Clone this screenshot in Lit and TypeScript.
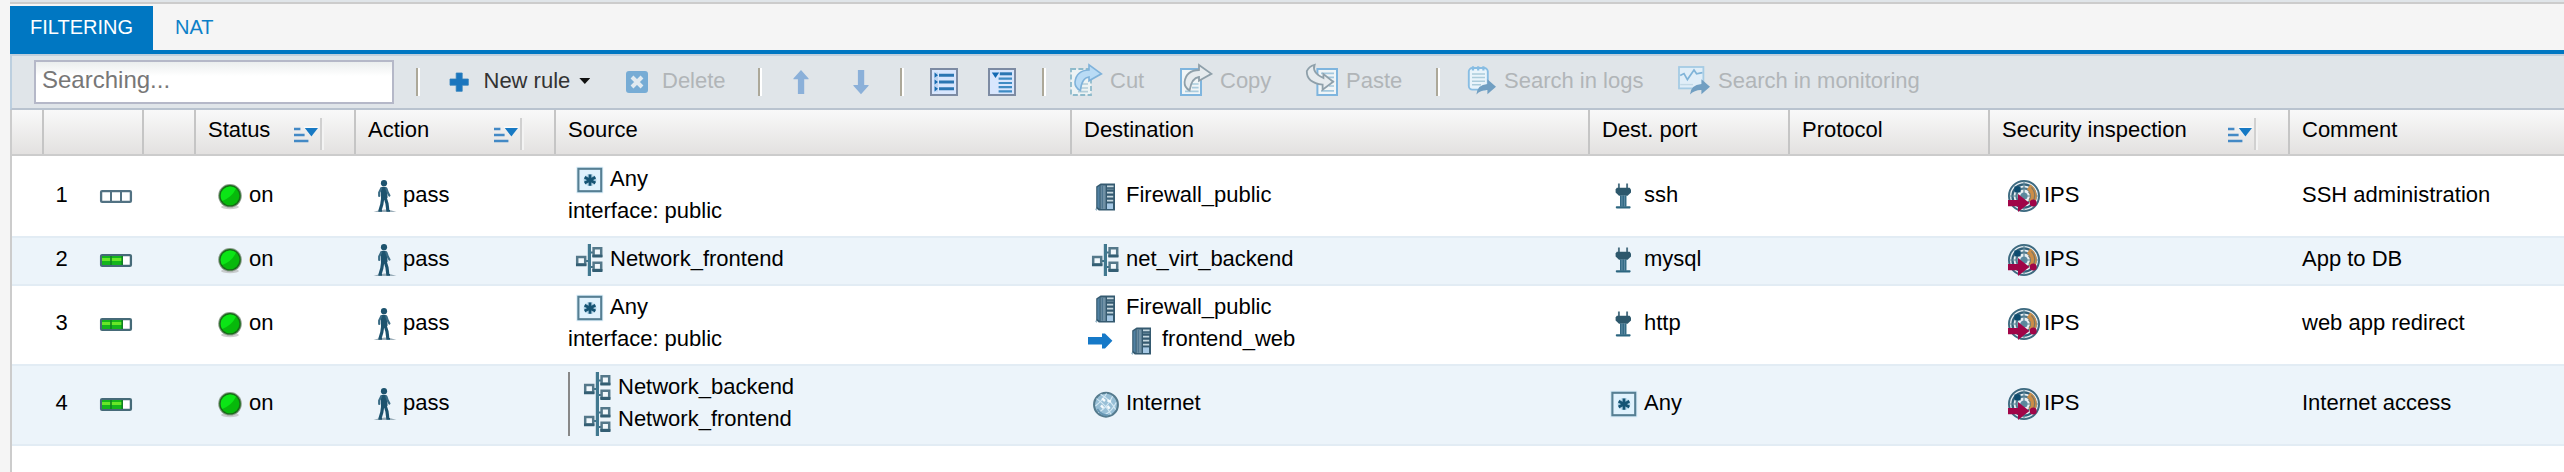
import { LitElement, html, css, svg, nothing } from "lit";
import { customElement, property } from "lit/decorators.js";

const shapes: Record<string, unknown> = {
  any: svg`
    <rect x="3.4" y="2.8" width="26.8" height="26.4" fill="#c9e6f6" opacity="0.75"/>
    <rect x="5.4" y="4.8" width="22.8" height="22.4" fill="#e0f2fd" stroke="#567f93" stroke-width="2.1"/>
    <path d="M17 10V22M11.6 13.4L22.4 18.8M22.4 13.4L11.6 18.8" stroke="#a9cde2" stroke-width="5"/>
    <path d="M17 10.4V21.8M11.6 13.2L22.4 19M22.4 13.2L11.6 19" stroke="#155474" stroke-width="2.7"/>`,
  net: svg`
    <path d="M12.5 17H16M17 8.6H20M17 23H20" stroke="#3f7389" stroke-width="2"/>
    <rect x="14.8" y="0" width="3.2" height="32" fill="#41788f"/>
    <path d="M4.2 13H12.2V20.4H4.2ZM20.6 4.3H28.2V11.7H20.6ZM20.6 18.7H28.2V26.1H20.6Z" fill="#f1f8fc" stroke="#54788a" stroke-width="2.5"/>
    <path d="M3 19.4H13.4V22.3H3ZM19.4 10.7H29.4V13.6H19.4ZM19.4 25.1H29.4V28H19.4Z" fill="#335e73"/>`,
  host: svg`
    <path d="M6 29.6L8 27V31Z" fill="#9dbccd"/>
    <path d="M7.2 6.6L11.6 3.4H26V30.6H9.8L7.2 28.2Z" fill="#355a70"/>
    <path d="M8.4 7.4L10.6 5.8V28.8L8.4 27Z" fill="#5181a2"/>
    <rect x="11.6" y="5.4" width="5" height="23.6" fill="#7192a6"/>
    <path d="M13.3 6V28.6" stroke="#47708b" stroke-width="1"/>
    <path d="M18 6.4H24.6M18 12.6H24.2M18 16.6H24.2M18 20.6H24.2" stroke="#c5d7df" stroke-width="1.9"/>
    <path d="M18 9.3H24.6" stroke="#5d8093" stroke-width="1.4"/>
    <rect x="18" y="23.4" width="6" height="5.6" fill="#a5c8e4"/>`,
  globe: svg`
    <circle cx="17" cy="16.7" r="11.9" fill="#98bfd6" stroke="#557b8e" stroke-width="2.1"/>
    <path d="M7.4 10.6Q17 17 22.2 26.6M11.6 6.2Q21.6 12 26.6 21.4M6.4 18Q13.6 12.6 17.6 5.6M9.4 24.6Q19 18.6 23.6 8.2M15.2 27.2Q23.2 23 27.2 14.4" fill="none" stroke="#d5e9f4" stroke-width="1.1"/>
    <path d="M13 10.4L16 13M18.4 12.4L22 13.6M12 17.4L14.4 20M18.6 18L20.6 20.8" stroke="#f4fafd" stroke-width="2.4"/>
    <path d="M8.4 21Q12 27.4 19 27.4" fill="none" stroke="#6595b2" stroke-width="1.6"/>`,
  plug: svg`
    <path d="M11.9 3.4V9M20.1 3.4V9" stroke="#4d7183" stroke-width="1.9"/>
    <path d="M9.8 7.8H22.6L24 9.4V12.4L20.6 15.8H12L8.6 12.4V9.4Z" fill="#2d586c"/>
    <rect x="13.2" y="15.6" width="6" height="11" fill="#5d8aa3"/>
    <path d="M16.2 15.6V26.6M13.7 15.6V26.6M18.8 15.6V26.6" stroke="#26617c" stroke-width="1.1"/>
    <rect x="8.8" y="26.2" width="14.8" height="2.2" rx="0.8" fill="#2c6680"/>`,
  ips: svg`
    <circle cx="16" cy="16" r="15" fill="#e8eff3" stroke="#3d6a80" stroke-width="2"/>
    <circle cx="16" cy="16" r="11.6" fill="none" stroke="#316079" stroke-width="2.2"/>
    <circle cx="16" cy="16" r="7.6" fill="none" stroke="#4f788c" stroke-width="2.1"/>
    <circle cx="16" cy="16" r="3.6" fill="#5a8ba3"/>
    <path d="M16 1V31M1 16H31" stroke="#5d8798" stroke-width="1.2"/>
    <path d="M22.2 4.6A13 13 0 0 1 25 25L20.6 20.8A7 7 0 0 0 19 9.6Z" fill="#cb8d47"/>
    <path d="M23.4 7.4A11.4 11.4 0 0 1 24.6 22M20.4 11.6A6.4 6.4 0 0 1 21 20" fill="none" stroke="#7a7766" stroke-width="1.2"/>
    <rect x="6.4" y="6.4" width="6.2" height="6" fill="#0d4b6e"/>
    <path d="M0 20H10V14L21.4 23L10 32V26.2H0Z" fill="#a00548"/>
    <circle cx="25.2" cy="23" r="3.5" fill="#a00548"/>`,
  walk: svg`
    <path d="M5.6 32Q11 29.4 17 29.4T28.4 32Z" fill="#8ba0ad" opacity="0.85"/>
    <circle cx="16" cy="3.2" r="3.1" fill="#1d536e"/>
    <path d="M12.6 7.4Q15.6 5.8 18.8 7.6L19.6 17.6L18 19.4H13L12.8 9.4Z" fill="#1d536e"/>
    <path d="M13.2 8.4L11.2 12.6V16M18.4 8.6L19.8 12.6L21.4 15.6" fill="none" stroke="#3a6c85" stroke-width="2.2" stroke-linecap="round"/>
    <path d="M14.8 17.6L13.8 24.4L12 30.4M17.2 17.6L19 23.6L19.8 30.4" fill="none" stroke="#1d536e" stroke-width="3.2"/>
    <path d="M10.4 30.8H14M18.4 30.8H22" stroke="#1d536e" stroke-width="1.8"/>`,
  on: svg`
    <ellipse cx="16" cy="27" rx="9" ry="2.2" fill="#b9b9b9" opacity="0.7"/>
    <circle cx="16" cy="15.8" r="11.8" fill="#8a9a8a"/>
    <circle cx="16" cy="15.8" r="10.8" fill="#176c17"/>
    <circle cx="16" cy="15.8" r="9.4" fill="#07b90b"/>
    <path d="M8.2 21A9.4 9.4 0 0 1 22 8.6Q18 17.4 8.2 21Z" fill="#0be516"/>`,
  redirect: svg`<path d="M0 13H14V9.6H17L24.4 16.8L17 24.4H14V20.6H0Z" fill="#1679c8"/>`,
  "level-0": svg`
    <rect x="1.1" y="11.1" width="29.8" height="10.8" rx="1" fill="#fff" stroke="#527283" stroke-width="2.3"/>
    <path d="M11 10.8V22M21 10.8V22" stroke="#527283" stroke-width="2"/>`,
  "level-2": svg`
    <rect x="1.1" y="11.1" width="29.8" height="10.8" rx="1" fill="#fff" stroke="#466a78" stroke-width="2.3"/>
    <rect x="2" y="12" width="20.4" height="9" fill="#14b51c"/>
    <rect x="2" y="14" width="20.4" height="3" fill="#68e628"/>
    <path d="M11 12V21M22.2 12V21" stroke="#108022" stroke-width="1.6"/>`,
  sort: svg`
    <path d="M0 9H6.4M0 15H10.6M0 21H14.4" stroke="#4389c5" stroke-width="2.5"/>
    <path d="M9.4 6.4H25.4L17 17Z" fill="#fff" opacity="0.7"/>
    <path d="M10.8 8H24L17.4 16.6Z" fill="#1779c3"/>`,
  plus: svg`<path d="M13.2 7H19.2V13H25.3V19.2H19.2V25.3H13.2V19.2H7V13H13.2Z" fill="#1b76be" stroke="#3182bd" stroke-width="0.8"/>`,
  remove: svg`
    <rect x="5" y="5" width="22" height="22" rx="3" fill="#77acd5"/>
    <path d="M11 11L21 21M21 11L11 21" stroke="#e1eaf0" stroke-width="4"/>`,
  up: svg`<path d="M16 4L23.6 12.4V13.2H19.2V28H12.9V13.2H8.4V12.4Z" fill="#8bb0d9"/>`,
  down: svg`<path d="M16 28.2L8.4 19.8V19H12.9V4H19.2V19H23.6V19.8Z" fill="#8bb0d9"/>`,
  list: svg`
    <rect x="3" y="3" width="26" height="26" fill="#d8e6fd" stroke="#7d8ba3" stroke-width="2"/>
    <path d="M6 6.4H10V25.6H6Z" fill="#bcd4f2"/>
    <path d="M11 9.2H26M11 16H26M11 22.8H26" stroke="#2b76b2" stroke-width="3"/>
    <path d="M6.6 6.6L10 9.2L6.6 11.8ZM6.6 13.4L10 16L6.6 18.6ZM6.6 20.2L10 22.8L6.6 25.4Z" fill="#176bb1"/>`,
  tree: svg`
    <rect x="3" y="3" width="26" height="26" fill="#d8e6fd" stroke="#7d8ba3" stroke-width="2"/>
    <path d="M5.8 6.6H13.2L9.5 12Z" fill="#1269b3"/>
    <path d="M13.8 7.8H26" stroke="#2b76b2" stroke-width="3"/>
    <path d="M12.6 12.6H26M12.6 17H26M12.6 21.2H26M12.6 25.4H26" stroke="#3e8bc4" stroke-width="2.2"/>`,
  cut: svg`
    <path d="M1 5H21V31H1Z" fill="#edf3f4" stroke="#8ebacb" stroke-width="1.8" stroke-dasharray="5 2.4"/>
    <path d="M10 20H18M10 24H18M8 27.6H18" stroke="#b3cdd8" stroke-width="1.6"/>
    <path d="M5 18Q6.4 6.4 19 6V0.9L31.4 9.8L19 16.8V13Q11.6 13.8 10.4 26.6Q4.6 23.6 5 18Z" fill="#b9dbf5" stroke="#7fb2da" stroke-width="1.6"/>`,
  copy: svg`
    <path d="M1 5H21V31H1Z" fill="#f0f5f7" stroke="#7fb5de" stroke-width="2"/>
    <path d="M12 20H18.6M12 23.6H18.6M5 27.4H18.6" stroke="#a9cbdd" stroke-width="1.7"/>
    <path d="M4.6 18Q6 6.4 19 6V0.9L31.4 9.8L19 16.8V13Q11.6 13.8 9.6 26.4Q4.2 23.6 4.6 18Z" fill="#e6ebee" stroke="#8fa0aa" stroke-width="1.8"/>`,
  paste: svg`
    <path d="M11.4 5H31V31H11.4Z" fill="#f0f5f7" stroke="#7fb5de" stroke-width="2"/>
    <path d="M15 9.4H28M18 13.4H28M24 17.4H28M23 22H28M15 26.8H28" stroke="#a3c8de" stroke-width="1.7"/>
    <path d="M8.6 0.8Q5.6 8.4 17.4 14V10L27.2 17.8L16.6 25.6V20.6Q0.6 18.6 0.8 7.2Q3 2 8.6 0.8Z" fill="#e6ebee" stroke="#8fa0aa" stroke-width="1.8"/>`,
  logs: svg`
    <rect x="4.8" y="4" width="19" height="21.6" rx="3.6" fill="#e9f4fb" stroke="#88bde3" stroke-width="1.9"/>
    <path d="M9 2.2V6.4M14.2 2.2V6.4M19.4 2.2V6.4" stroke="#88bde3" stroke-width="2.2"/>
    <path d="M8 10H21M8 13.6H21M8 17.2H21M8 20.8H17" stroke="#abccdb" stroke-width="1.5"/>
    <path d="M12.4 30.6Q13 20.6 23.4 20V15.2L32 22.8L23.4 30.2V26Q16.6 25.8 12.4 30.6Z" fill="#719fc2"/>`,
  chart: svg`
    <rect x="1" y="3" width="24.4" height="21.4" fill="#e0eef8" stroke="#a5cbe4" stroke-width="1.8"/>
    <path d="M2.2 11.4L6 9.6L9.4 15.6L16 6L18.6 9.8L24.4 8.6" fill="none" stroke="#80b4d8" stroke-width="1.7"/>
    <path d="M2.2 20.6H15" stroke="#c3d9e6" stroke-width="1.4"/>
    <path d="M12 30.6Q12.6 20.8 23.4 20V15.2L32 22.8L23.4 30.2V26Q16.6 25.8 12 30.6Z" fill="#719fc2"/>`,
};

@customElement("fw-icon")
class FwIcon extends LitElement {
  static styles = css`
    :host { display: block; flex: none; width: 32px; height: 32px; }
    svg { display: block; width: 32px; height: 32px; overflow: visible; }
  `;
  @property() name = "";
  render() {
    return html`<svg viewBox="0 0 32 32" fill="none">${shapes[this.name]}</svg>`;
  }
}

interface Entry {
  icon?: string;
  text: string;
  redirect?: boolean;
}
interface Rule {
  level: string;
  source: Entry[];
  dest: Entry[];
  port: Entry;
  comment: string;
}

const anyPublic: Entry[] = [{ icon: "any", text: "Any" }, { text: "interface: public" }];

const rules: Rule[] = [
  { level: "level-0", source: anyPublic, dest: [{ icon: "host", text: "Firewall_public" }],
    port: { icon: "plug", text: "ssh" }, comment: "SSH administration" },
  { level: "level-2", source: [{ icon: "net", text: "Network_frontend" }], dest: [{ icon: "net", text: "net_virt_backend" }],
    port: { icon: "plug", text: "mysql" }, comment: "App to DB" },
  { level: "level-2", source: anyPublic,
    dest: [{ icon: "host", text: "Firewall_public" }, { icon: "host", text: "frontend_web", redirect: true }],
    port: { icon: "plug", text: "http" }, comment: "web app redirect" },
  { level: "level-2", source: [{ icon: "net", text: "Network_backend" }, { icon: "net", text: "Network_frontend" }],
    dest: [{ icon: "globe", text: "Internet" }], port: { icon: "any", text: "Any" }, comment: "Internet access" },
];

const headers: { label: string; sort?: boolean }[] = [
  { label: "" }, { label: "" }, { label: "" },
  { label: "Status", sort: true }, { label: "Action", sort: true },
  { label: "Source" }, { label: "Destination" }, { label: "Dest. port" }, { label: "Protocol" },
  { label: "Security inspection", sort: true }, { label: "Comment" },
];

@customElement("app-root")
class AppRoot extends LitElement {
  static styles = css`
    :host {
      display: flex; flex-direction: column; box-sizing: border-box;
      width: 100%; height: 472px; padding-left: 10px; overflow: hidden;
      background: #f5f5f5; color: #000;
      font: 22px/29px "Liberation Sans", Arial, Helvetica, sans-serif;
      white-space: nowrap;
    }
    * { box-sizing: border-box; }
    .strip { flex: none; height: 4px; background: #e0e5e9; border-bottom: 2px solid #ccc; }
    .tabs { flex: none; display: flex; height: 50px; padding-top: 2px; border-bottom: 4px solid #0077c2; font-size: 20px; line-height: 22px; color: #0c80c8; }
    .tab { padding: 10px 22px 0; }
    .tab.active { width: 143px; padding: 10px 0 0 20px; background: #0077c2; color: #fff; }
    .toolbar {
      flex: none; display: flex; height: 56px; padding: 4px 0 0 22px;
      background: #e0e5e9; border: 2px solid #b9c3cf; border-top-color: #c1cfdc; border-left: 2px solid #bccfdf; border-right: 0;
    }
    .search {
      width: 360px; height: 44px; margin: 0; padding: 0 0 5px 6px; border: 2px solid #b5b8c8; border-radius: 0;
      background: linear-gradient(#ebeeee, #fff 14px); font: 24px "Liberation Sans", Arial, sans-serif; outline: none;
    }
    .search::placeholder { color: #777; opacity: 1; }
    .sep { flex: none; width: 4px; height: 28px; margin-top: 8px; background: linear-gradient(90deg, #aca899 50%, #fff 50%); }
    .btn { flex: none; display: flex; height: 44px; padding-top: 6px; color: #333; }
    .btn.off { color: #b1b5b8; }
    .btn span { margin-left: 8px; }
    .s1 { margin-left: 22px; }
    .new { width: 180px; margin-left: 23px; }
    .new span { margin-left: 8.5px; }
    .caret { width: 11px; height: 6px; margin: 12px 0 0 9px; background: #111; clip-path: polygon(0 0, 100% 0, 50% 100%); }
    .delete { width: 137px; margin-left: -2px; }
    .delete span { margin-left: 9px; }
    .up { width: 60px; margin-left: 23px; }
    .down { width: 32px; }
    .s3 { margin-left: 23px; }
    .list { width: 58px; margin-left: 24px; }
    .tree { width: 32px; }
    .s4 { margin-left: 24px; }
    .cut { width: 110px; margin-left: 24px; }
    .copy { width: 126px; }
    .paste { width: 106px; }
    .s5 { margin-left: 24px; }
    .logs { width: 214px; margin-left: 24px; }
    .icon-hi { padding-top: 4px; }
    .icon-hi span { margin-top: 2px; }

    .grid { flex: 1; min-height: 0; background: #fff; border-left: 2px solid #ccc; }
    .head, .row { display: grid; grid-template-columns: 32px 100px 52px 160px 200px 516px 518px 200px 200px 300px 1fr; }
    .head { height: 46px; background: linear-gradient(#f9f9f9, #e3e1e0); border-bottom: 2px solid #ccc; }
    .th { display: flex; height: 44px; padding: 5px 0 0 12px; border-right: 2px solid #c5c5c5; }
    .th:last-child { border-right: 0; }
    .sorter { display: flex; margin: 3px 32px 0 auto; height: 32px; }
    .sorter fw-icon { width: 26px; margin-top: 2px; }
    .grip { width: 4px; height: 32px; margin-right: -2px; background: linear-gradient(90deg, #d0d0d0 50%, #f3f3f3 50%); }

    .row { padding: 6px 0 8px; border-bottom: 2px solid #e2ecf4; align-items: center; }
    .head + .row { padding: 8px 0; }
    .alt { background: #ecf4fa; }
    .line { display: flex; height: 32px; align-items: flex-start; }
    .cell { padding-left: 12px; }
    .obj fw-icon { margin: 0 5px; }
    .obj .arrow { margin: 0 0 0 4px; }
    .multi { border-left: 2px solid #888; padding-left: 6px; }
    .gap fw-icon { margin-right: 3px; }
    .inset fw-icon { margin-left: 6px; }
    .ips fw-icon { margin-right: 4px; }
    .num { padding-left: 11.5px; }
    .num span { width: 44.5px; }
  `;

  entry(e: Entry) {
    return html`<div class="line obj">
      ${e.redirect ? html`<fw-icon class="arrow" name="redirect"></fw-icon>` : nothing}
      ${e.icon ? html`<fw-icon name=${e.icon}></fw-icon>` : nothing}<span>${e.text}</span>
    </div>`;
  }

  row(r: Rule, i: number) {
    return html`<div class="row ${i % 2 ? "alt" : ""}">
      <div></div>
      <div class="line num"><span>${i + 1}</span><fw-icon name=${r.level}></fw-icon></div>
      <div></div>
      <div class="cell line gap inset"><fw-icon name="on"></fw-icon><span>on</span></div>
      <div class="cell line gap"><fw-icon name="walk"></fw-icon><span>pass</span></div>
      <div class="cell"><div class=${r.source.filter((s) => s.icon).length > 1 ? "multi" : ""}>${r.source.map((s) => this.entry(s))}</div></div>
      <div class="cell">${r.dest.map((d) => this.entry(d))}</div>
      <div class="cell">${this.entry(r.port)}</div>
      <div></div>
      <div class="cell line inset ips"><fw-icon name="ips"></fw-icon><span>IPS</span></div>
      <div class="cell line"><span>${r.comment}</span></div>
    </div>`;
  }

  button(cls: string, icon: string, label = "") {
    return html`<div class="btn ${cls}"><fw-icon name=${icon}></fw-icon>${label ? html`<span>${label}</span>` : nothing}</div>`;
  }

  render() {
    return html`
      <div class="strip"></div>
      <div class="tabs"><div class="tab active">FILTERING</div><div class="tab">NAT</div></div>
      <div class="toolbar">
        <input class="search" placeholder="Searching..." />
        <div class="sep s1"></div>
        <div class="btn new"><fw-icon name="plus"></fw-icon><span>New rule</span><i class="caret"></i></div>
        ${this.button("off delete", "remove", "Delete")}
        <div class="sep"></div>
        ${this.button("up", "up")}${this.button("down", "down")}
        <div class="sep s3"></div>
        ${this.button("list", "list")}${this.button("tree", "tree")}
        <div class="sep s4"></div>
        ${this.button("off icon-hi cut", "cut", "Cut")}
        ${this.button("off icon-hi copy", "copy", "Copy")}
        ${this.button("off icon-hi paste", "paste", "Paste")}
        <div class="sep s5"></div>
        ${this.button("off icon-hi logs", "logs", "Search in logs")}
        ${this.button("off icon-hi monitor", "chart", "Search in monitoring")}
      </div>
      <div class="grid">
        <div class="head">
          ${headers.map((h) => html`<div class="th"><span>${h.label}</span>${h.sort
            ? html`<div class="sorter"><fw-icon name="sort"></fw-icon><div class="grip"></div></div>` : nothing}</div>`)}
        </div>
        ${rules.map((r, i) => this.row(r, i))}
      </div>`;
  }
}
